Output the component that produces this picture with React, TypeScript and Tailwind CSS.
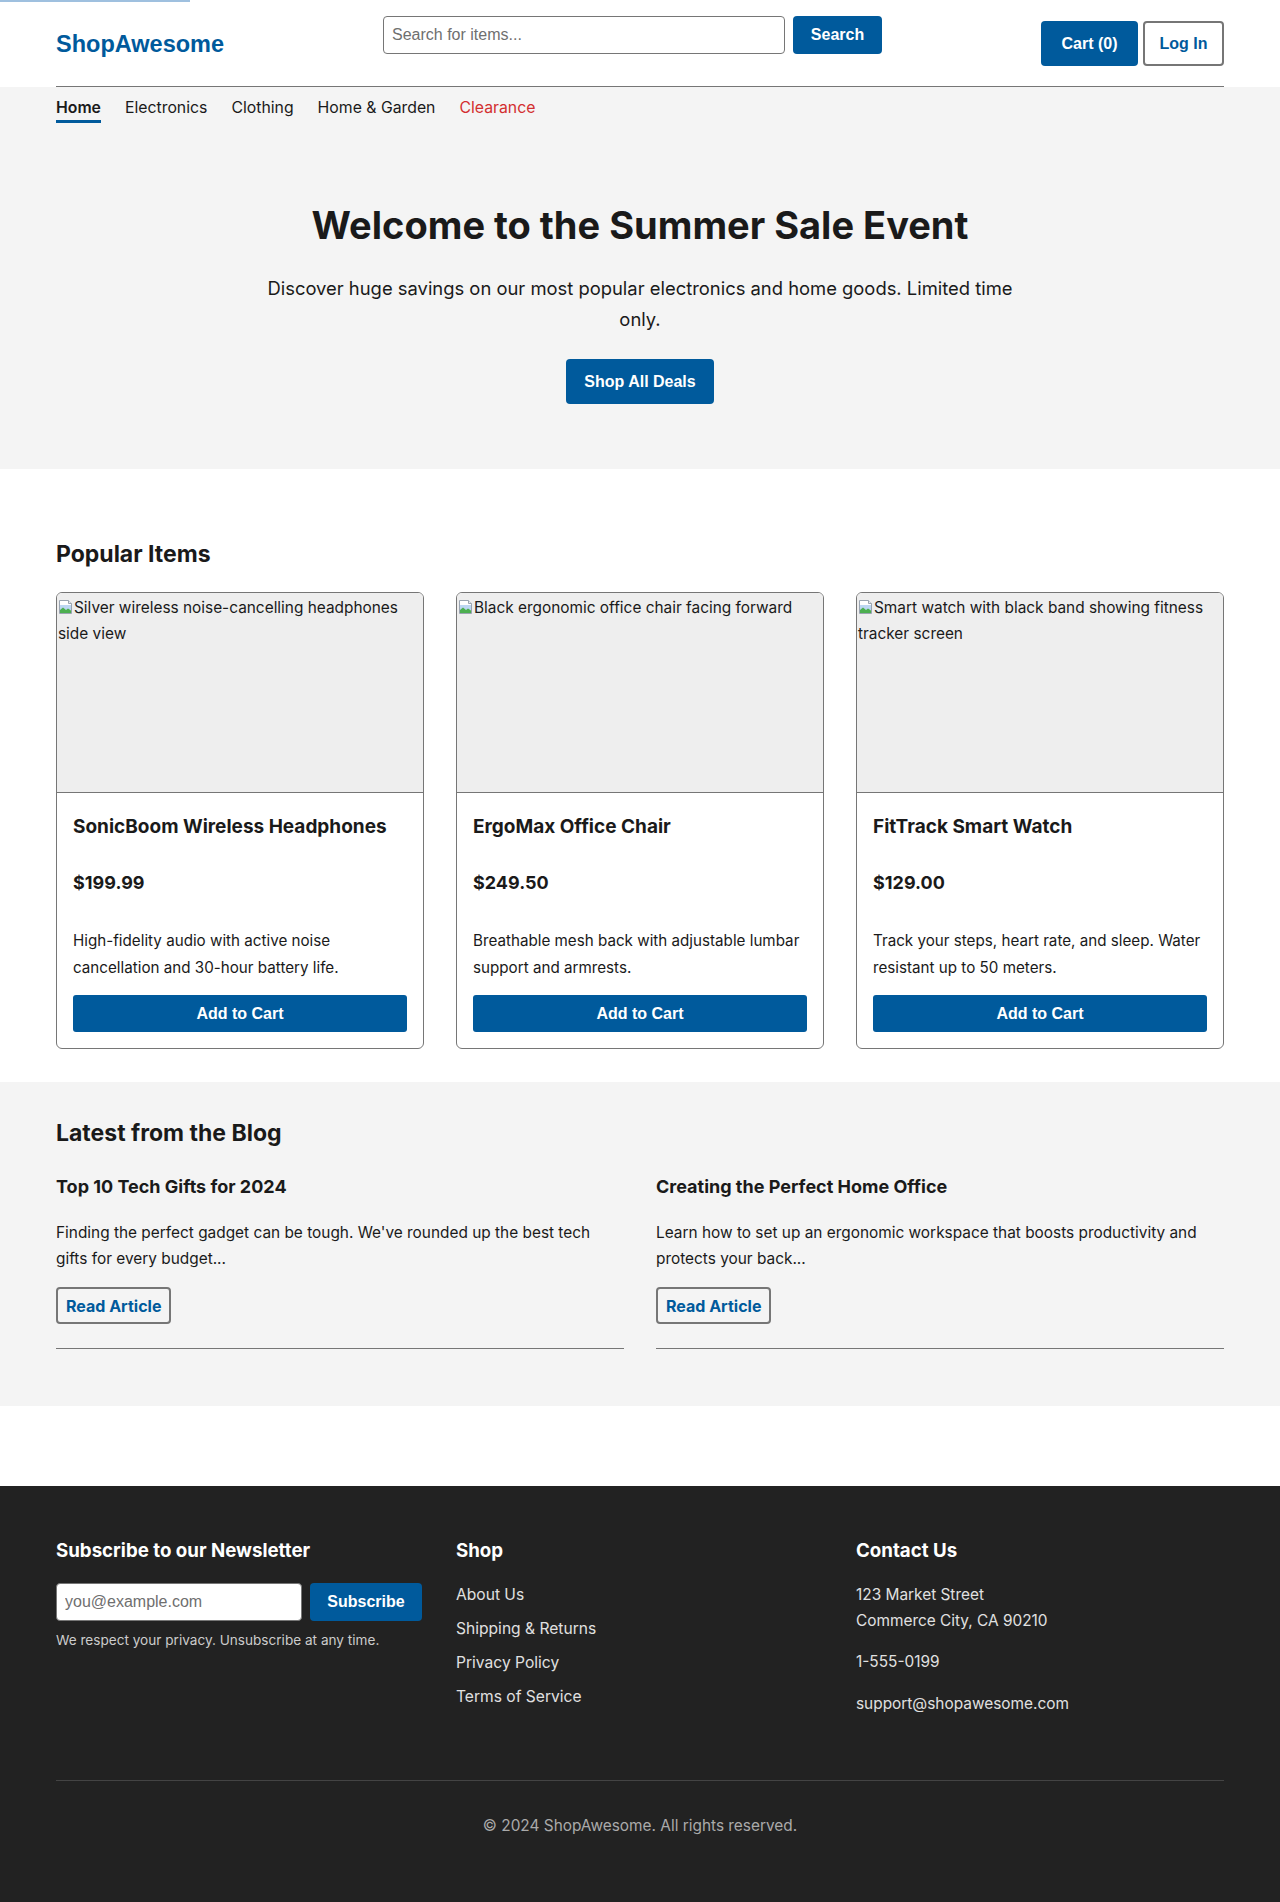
import React from "react";

const arial = "font-['Liberation_Sans',Arial,sans-serif]";

const products = [
  {
    alt: "Silver wireless noise-cancelling headphones side view",
    name: "SonicBoom Wireless Headphones",
    price: "$199.99",
    desc: "High-fidelity audio with active noise cancellation and 30-hour battery life.",
  },
  {
    alt: "Black ergonomic office chair facing forward",
    name: "ErgoMax Office Chair",
    price: "$249.50",
    desc: "Breathable mesh back with adjustable lumbar support and armrests.",
  },
  {
    alt: "Smart watch with black band showing fitness tracker screen",
    name: "FitTrack Smart Watch",
    price: "$129.00",
    desc: "Track your steps, heart rate, and sleep. Water resistant up to 50 meters.",
  },
];

const posts = [
  {
    title: "Top 10 Tech Gifts for 2024",
    text: "Finding the perfect gadget can be tough. We've rounded up the best tech gifts for every budget...",
  },
  {
    title: "Creating the Perfect Home Office",
    text: "Learn how to set up an ergonomic workspace that boosts productivity and protects your back...",
  },
];

const BrokenImg = () => (
  <svg width="16" height="16" viewBox="0 0 16 16" className="inline-block align-[-2px]">
    <path d="M1.5 1.5h9l3 3v10h-12z" fill="#fff" stroke="#9aa4b1" />
    <path d="M10.5 1.5v3h3" fill="#e6e9ee" stroke="#9aa4b1" />
    <rect x="2" y="6" width="11" height="5" fill="#bcd6f2" />
    <path d="M2 14V11l3-2.5 3 2.5 2-1.5 3 2V14z" fill="#4caf50" />
  </svg>
);

function Header() {
  return (
    <header className="bg-white">
      <div className="max-w-[1200px] mx-auto px-4">
        <div className="flex justify-between items-start h-[87px] border-b border-[#767676]">
          <a className={`mt-[29px] text-[23.5px] leading-[30px] font-bold text-[#005a9c] ${arial}`}>ShopAwesome</a>
          <form className="mt-4 flex gap-2">
            <input
              placeholder="Search for items..."
              className={`w-[402px] h-[38px] px-2 border border-[#767676] rounded-[4px] text-[16px] placeholder:text-[#6f6f6f] ${arial}`}
            />
            <button type="button" className={`w-[89px] h-[38px] rounded-[4px] bg-[#005a9c] text-white font-bold text-[16px] ${arial}`}>
              Search
            </button>
          </form>
          <div className="mt-[21px] flex gap-[5px]">
            <button className={`w-[97px] h-[45px] rounded-[4px] bg-[#005a9c] text-white font-bold text-[16px] ${arial}`}>
              Cart (0)
            </button>
            <button className={`w-[81px] h-[45px] rounded-[4px] border-2 border-[#767676] bg-white text-[#005a9c] font-bold text-[16px] ${arial}`}>
              Log In
            </button>
          </div>
        </div>
      </div>
    </header>
  );
}

function Hero() {
  const links = ["Electronics", "Clothing", "Home & Garden"];
  return (
    <section className="bg-[#f4f4f4]">
      <div className="max-w-[1200px] mx-auto px-4">
        <nav className="flex gap-6 pt-[9px] text-[15.8px] leading-6">
          <a className="font-semibold text-[#1a1a1a] border-b-[3px] border-[#005a9c]">Home</a>
          {links.map((l) => (
            <a key={l} className="text-[#1a1a1a]">{l}</a>
          ))}
          <a className="text-[#d32f2f]">Clearance</a>
        </nav>
        <div className="pt-[81px] pb-[65px] flex flex-col items-center text-center">
          <h1 className="text-[38px] leading-[43px] font-bold text-[#1a1a1a]">
            Welcome to the Summer Sale Event
          </h1>
          <p className="mt-[26px] max-w-[770px] text-[18.4px] leading-[31px] text-[#1a1a1a]">
            Discover huge savings on our most popular electronics and home goods. Limited time only.
          </p>
          <button className={`mt-6 w-[148px] h-[45px] rounded-[4px] bg-[#005a9c] text-white font-bold text-[16px] ${arial}`}>
            Shop All Deals
          </button>
        </div>
      </div>
    </section>
  );
}

function Popular() {
  return (
    <section className="bg-white">
      <div className="max-w-[1200px] mx-auto px-4 pt-[70px] pb-[33px]">
        <h2 className="text-[23px] leading-[30px] font-bold text-[#1a1a1a]">Popular Items</h2>
        <div className="mt-[23px] grid grid-cols-3 gap-8">
          {products.map((p) => (
            <div key={p.name} className="border border-[#767676] rounded-[6px] overflow-hidden flex flex-col">
              <div className="h-[200px] bg-[#eeeeee] border-b border-[#767676] px-[1px] pt-[2px] text-[15.4px] leading-[26px] text-[#1a1a1a]">
                <BrokenImg />
                {p.alt}
              </div>
              <div className="px-4 pt-[21px] pb-4 flex flex-col flex-1">
                <h3 className="text-[19px] leading-[26px] font-bold text-[#1a1a1a]">{p.name}</h3>
                <p className="mt-[30px] text-[18px] leading-[26px] font-bold text-[#1a1a1a]">{p.price}</p>
                <p className="mt-[32px] text-[15.2px] leading-[26.5px] text-[#1a1a1a]">{p.desc}</p>
                <button className={`mt-[14px] h-[37px] w-full rounded-[3px] bg-[#005a9c] text-white font-bold text-[16px] ${arial}`}>
                  Add to Cart
                </button>
              </div>
            </div>
          ))}
        </div>
      </div>
    </section>
  );
}

function Blog() {
  return (
    <section className="bg-[#f4f4f4]">
      <div className="max-w-[1200px] mx-auto px-4 pt-[36px] pb-[57px]">
        <h2 className="text-[23px] leading-[30px] font-bold text-[#1a1a1a]">Latest from the Blog</h2>
        <div className="mt-[27px] grid grid-cols-2 gap-8">
          {posts.map((p) => (
            <article key={p.title} className="border-b border-[#767676] pb-6">
              <h3 className="text-[18px] leading-6 font-bold text-[#1a1a1a]">{p.title}</h3>
              <p className="mt-[21px] text-[15.4px] leading-[26px] text-[#1a1a1a]">{p.text}</p>
              <a className="mt-[15px] inline-flex items-center h-[37px] px-[8px] border-2 border-[#767676] rounded-[4px] text-[#005a9c] font-bold text-[16px]">
                Read Article
              </a>
            </article>
          ))}
        </div>
      </div>
    </section>
  );
}

function Footer() {
  const shop = ["About Us", "Shipping & Returns", "Privacy Policy", "Terms of Service"];
  return (
    <footer className="mt-20 bg-[#222222] text-[#e0e0e0]">
      <div className="max-w-[1200px] mx-auto px-4 pt-[53px]">
        <div className="grid grid-cols-3 gap-8">
          <div>
            <h3 className="text-[18.7px] leading-6 font-bold text-white">Subscribe to our Newsletter</h3>
            <form className="mt-5 flex gap-2">
              <input
                placeholder="you@example.com"
                className={`w-[246px] h-[38px] px-2 bg-white border border-[#767676] rounded-[4px] text-[16px] text-[#1a1a1a] placeholder:text-[#6f6f6f] ${arial}`}
              />
              <button type="button" className={`w-[112px] h-[38px] rounded-[4px] bg-[#005a9c] text-white font-bold text-[16px] ${arial}`}>
                Subscribe
              </button>
            </form>
            <p className="mt-[10px] text-[13.6px] leading-[18px] text-[#cccccc]">We respect your privacy. Unsubscribe at any time.</p>
          </div>
          <div>
            <h3 className="text-[18.7px] leading-6 font-bold text-white">Shop</h3>
            <ul className="mt-5 flex flex-col gap-[10px] text-[15.6px] leading-6">
              {shop.map((s) => (
                <li key={s}>{s}</li>
              ))}
            </ul>
          </div>
          <div>
            <h3 className="text-[18.7px] leading-6 font-bold text-white">Contact Us</h3>
            <p className="mt-[19px] text-[15.4px] leading-[26px]">
              123 Market Street
              <br />
              Commerce City, CA 90210
            </p>
            <p className="mt-[15px] text-[15.4px] leading-[26px]">1-555-0199</p>
            <p className="mt-4 text-[15.4px] leading-[26px]">support@shopawesome.com</p>
          </div>
        </div>
        <div className="mt-[63px] border-t border-[#444444] pt-[33px] pb-[65px] text-center text-[15.4px] leading-6 text-[#aaaaaa]">
          © 2024 ShopAwesome. All rights reserved.
        </div>
      </div>
    </footer>
  );
}

export default function App() {
  return (
    <div className="relative min-h-screen bg-white font-['Inter',sans-serif] text-[#1a1a1a]">
      <div className="absolute top-0 left-0 w-[190px] h-[2px] bg-[#9fc0df]" />
      <Header />
      <Hero />
      <Popular />
      <Blog />
      <Footer />
    </div>
  );
}
